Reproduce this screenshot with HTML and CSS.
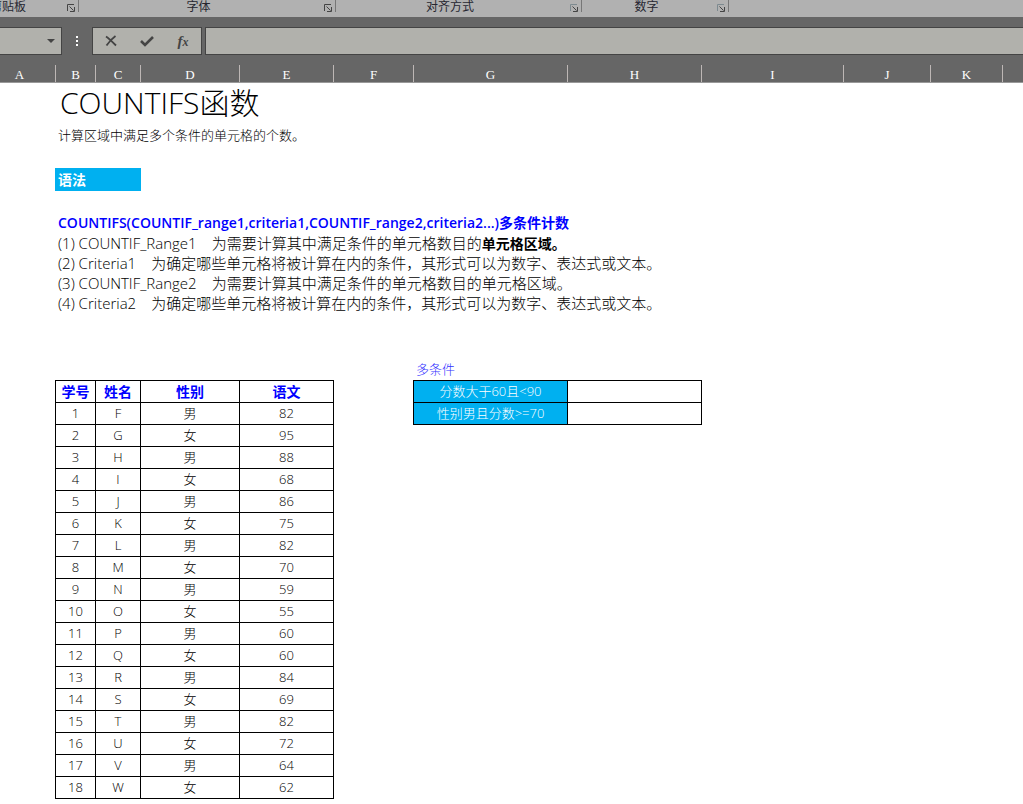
FILE: index.html
```html
<!DOCTYPE html>
<html lang="zh-CN">
<head>
<meta charset="utf-8">
<title>COUNTIFS函数</title>
<link rel="stylesheet" href="styles.css">
</head>
<body>
<svg class="defs" aria-hidden="true">
  <symbol id="launcher" viewBox="0 0 8 8">
    <path d="M0.5 7V0.5H7" fill="none" stroke="currentColor"/>
    <path d="M2.5 2.5L6.5 6.5M7.5 3V7.5H3" fill="none" stroke="#444"/>
  </symbol>
</svg>
<header class="ribbon">
  <div class="group clipboard"><span class="group-name">剪贴板</span><button class="launcher" aria-label="剪贴板设置"><svg><use href="#launcher"/></svg></button></div>
  <div class="group font"><span class="group-name">字体</span><button class="launcher" aria-label="字体设置"><svg><use href="#launcher"/></svg></button></div>
  <div class="group align"><span class="group-name">对齐方式</span><button class="launcher soft" aria-label="对齐设置"><svg><use href="#launcher"/></svg></button></div>
  <div class="group number"><span class="group-name">数字</span><button class="launcher soft" aria-label="数字设置"><svg><use href="#launcher"/></svg></button></div>
</header>
<div class="formula-bar">
  <button class="name-box" aria-label="名称框"><svg width="8" height="4" viewBox="0 0 8 4"><path d="M0 0H8L4 4Z" fill="#444"/></svg></button>
  <svg class="dots" width="2" height="10" viewBox="0 0 2 10"><path d="M0 0H2V2H0ZM0 4H2V6H0ZM0 8H2V10H0Z" fill="#fff"/></svg>
  <div class="actions">
    <button aria-label="取消"><svg width="12" height="12" viewBox="0 0 12 12"><path d="M1 1.5C4 3.5 8 7.500 11 10.500M10.500 1C7 3.500 4 7 1.500 10.500" fill="none" stroke="#444" stroke-width="1.800"/></svg></button>
    <button aria-label="输入"><svg width="14" height="12" viewBox="0 0 14 12"><path d="M1 6L5 10L13 2" fill="none" stroke="#444" stroke-width="2.600"/></svg></button>
    <button class="fx" aria-label="插入函数">f<span class="fx-x">x</span></button>
  </div>
  <input class="formula" type="text" aria-label="编辑栏">
</div>
<div class="columns">
  <span>A</span><span>B</span><span>C</span><span>D</span><span>E</span><span>F</span><span>G</span><span>H</span><span>I</span><span>J</span><span>K</span>
</div>
<main class="sheet">
  <h1 class="title">COUNTIFS函数</h1>
  <p class="summary">计算区域中满足多个条件的单元格的个数。</p>
  <h2 class="badge">语法</h2>
  <p class="syntax">COUNTIFS(COUNTIF_range1,criteria1,COUNTIF_range2,criteria2...)多条件计数</p>
  <div class="params">
    <p>(1) COUNTIF_Range1　为需要计算其中满足条件的单元格数目的<b>单元格区域。</b></p>
    <p>(2) Criteria1　为确定哪些单元格将被计算在内的条件，其形式可以为数字、表达式或文本。</p>
    <p>(3) COUNTIF_Range2　为需要计算其中满足条件的单元格数目的单元格区域。</p>
    <p>(4) Criteria2　为确定哪些单元格将被计算在内的条件，其形式可以为数字、表达式或文本。</p>
  </div>
  <div class="tables">
    <table class="scores">
      <colgroup><col class="col-b"><col class="col-c"><col class="col-d"><col class="col-e"></colgroup>
      <thead><tr><th>学号</th><th>姓名</th><th>性别</th><th>语文</th></tr></thead>
      <tbody>
        <tr><td>1</td><td>F</td><td>男</td><td>82</td></tr>
        <tr><td>2</td><td>G</td><td>女</td><td>95</td></tr>
        <tr><td>3</td><td>H</td><td>男</td><td>88</td></tr>
        <tr><td>4</td><td>I</td><td>女</td><td>68</td></tr>
        <tr><td>5</td><td>J</td><td>男</td><td>86</td></tr>
        <tr><td>6</td><td>K</td><td>女</td><td>75</td></tr>
        <tr><td>7</td><td>L</td><td>男</td><td>82</td></tr>
        <tr><td>8</td><td>M</td><td>女</td><td>70</td></tr>
        <tr><td>9</td><td>N</td><td>男</td><td>59</td></tr>
        <tr><td>10</td><td>O</td><td>女</td><td>55</td></tr>
        <tr><td>11</td><td>P</td><td>男</td><td>60</td></tr>
        <tr><td>12</td><td>Q</td><td>女</td><td>60</td></tr>
        <tr><td>13</td><td>R</td><td>男</td><td>84</td></tr>
        <tr><td>14</td><td>S</td><td>女</td><td>69</td></tr>
        <tr><td>15</td><td>T</td><td>男</td><td>82</td></tr>
        <tr><td>16</td><td>U</td><td>女</td><td>72</td></tr>
        <tr><td>17</td><td>V</td><td>男</td><td>64</td></tr>
        <tr><td>18</td><td>W</td><td>女</td><td>62</td></tr>
      </tbody>
    </table>
    <table class="criteria">
      <caption>多条件</caption>
      <colgroup><col class="col-g"><col class="col-h"></colgroup>
      <tbody>
        <tr><th scope="row">分数大于60且&lt;90</th><td></td></tr>
        <tr><th scope="row">性别男且分数&gt;=70</th><td></td></tr>
      </tbody>
    </table>
  </div>
</main>
</body>
</html>
```
FILE: styles.css
```css
* { box-sizing: border-box; }

body {
  margin: 0;
  background: #fff;
  color: #000;
  font-family: "Open Sans", "Noto Sans CJK SC", sans-serif;
  font-weight: 300;
  overflow-x: hidden;
}

h1, h2, p { margin: 0; }

button {
  border: 0;
  padding: 0;
  background: none;
  color: #444;
}

.defs { display: none; }

.ribbon {
  display: flex;
  height: 17px;
  background: #b1b1b1;
}

.group {
  display: flex;
  flex: none;
  height: 12px;
  border-right: 1px solid #777;
  padding-right: 3px;
}

.group-name {
  flex: 1;
  padding-right: 6px;
  color: #262630;
  font-family: "Noto Sans CJK SC", sans-serif;
  font-size: 12px;
  font-weight: 400;
  line-height: 12px;
  text-align: center;
  white-space: nowrap;
}

.clipboard { width: 79px; }
.clipboard .group-name { text-align: left; text-indent: -10px; }
.font { width: 257px; }
.align { width: 246px; }
.number { width: 147px; }

.launcher {
  width: 8px;
  height: 8px;
  margin-top: 4px;
  color: #444;
}

.launcher.soft { color: #7d8a90; }
.launcher svg { display: block; width: 8px; height: 8px; }

.formula-bar {
  display: flex;
  align-items: center;
  height: 48px;
  background: #666;
}

.name-box, .actions, .formula {
  height: 28px;
  border: 1px solid #444;
  background: #b1b1ac;
}

.name-box {
  display: flex;
  align-items: center;
  justify-content: flex-end;
  width: 62px;
  padding-right: 6px;
  border-left: 0;
}

.dots { margin: 0 14px; }

.actions {
  display: grid;
  grid-template-columns: repeat(3, 36px);
  width: 110px;
  margin-right: 3px;
}

.actions button {
  display: flex;
  align-items: center;
  justify-content: center;
}

.actions .fx {
  font: italic bold 15px "Liberation Serif", serif;
}

.fx-x { font-size: 12px; padding-top: 3px; }

.formula {
  flex: 1;
  min-width: 0;
  border-right: 0;
  padding: 0 6px;
}

.columns {
  display: grid;
  grid-template-columns: 56px 40px 45px 99px 94px 80px 154px 134px 142px 87px 72px;
  border-bottom: 1px solid #999;
  background: #666;
  color: #fff;
  font: 13px/15px "Liberation Serif", serif;
  text-align: center;
}

.columns span {
  padding-top: 2px;
  border-right: 1px solid #bdb7b5;
}

.columns span:first-child { padding-right: 16px; }

.sheet { padding-left: 55px; }

.title {
  padding-left: 5px;
  font-size: 30px;
  font-weight: 300;
  line-height: 40px;
}

.summary {
  padding-left: 3px;
  font-size: 13px;
  line-height: 24px;
}

.badge {
  width: 86px;
  margin: 21px 0 22px;
  padding-left: 3px;
  background: #00b0f0;
  color: #fff;
  font-size: 14px;
  font-weight: 700;
  line-height: 23px;
}

.syntax {
  padding-left: 3px;
  color: #00f;
  font-size: 14px;
  font-weight: 600;
  line-height: 20px;
  white-space: nowrap;
}

.params {
  padding-left: 3px;
  font-size: 15px;
  line-height: 20px;
  white-space: nowrap;
}

.params b {
  font-size: 14px;
  font-weight: 700;
  line-height: 1;
}

.tables {
  display: flex;
  align-items: flex-start;
  gap: 79px;
  margin-top: 46px;
}

table {
  border-collapse: collapse;
  table-layout: fixed;
  font-size: 13px;
  line-height: 21px;
}

th, td {
  height: 22px;
  padding: 0;
  border: 1px solid #000;
  text-align: center;
}

.scores { width: 279px; margin-top: 21px; }
.criteria { width: 289px; }

.col-b { width: 40px; }
.col-c { width: 45px; }
.col-d { width: 99px; }
.col-e { width: 94px; }
.col-g { width: 154px; }
.col-h { width: 134px; }

.scores th {
  color: #00f;
  font-size: 14px;
  font-weight: 700;
}

.criteria caption {
  padding-left: 3px;
  color: #33f;
  line-height: 21px;
  text-align: left;
}

.criteria th {
  background: #00b0f0;
  color: #fff;
  font-weight: 300;
}
```
